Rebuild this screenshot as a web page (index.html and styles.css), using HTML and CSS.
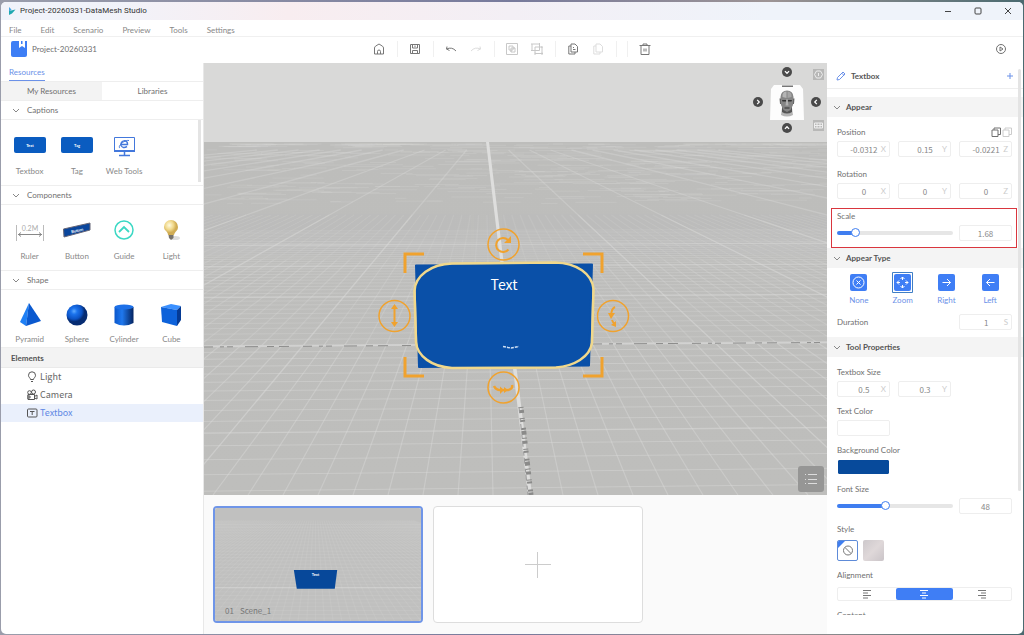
FILE: index.html
```html
<!DOCTYPE html>
<html lang="en">
<head>
<meta charset="utf-8">
<title>Project-20260331-DataMesh Studio</title>
<link rel="stylesheet" href="styles.css">
</head>
<body>
<div class="window">
  <header class="titlebar">
    <svg class="app-logo" viewBox="0 0 8 8"><path d="M1 0 3.500 2.500 1 5Z" fill="#4aa8e8"/><path d="M1 4 7.500 2.500 4 6.500 1 8Z" fill="#20a8b0"/></svg>
    <h1 class="title">Project-20260331-DataMesh Studio</h1>
    <div class="window-controls">
      <button aria-label="Minimize"><svg viewBox="0 0 8 8"><path d="M1 4.500H7"/></svg></button>
      <button aria-label="Maximize"><svg viewBox="0 0 8 8"><rect x="1" y="1" width="6" height="6" rx="1"/></svg></button>
      <button aria-label="Close"><svg viewBox="0 0 8 8"><path d="M1 1 7 7M7 1 1 7"/></svg></button>
    </div>
  </header>
  <nav class="menubar">
    <button>File</button><button>Edit</button><button>Scenario</button><button>Preview</button><button>Tools</button><button>Settings</button>
  </nav>
  <div class="toolbar">
    <div class="project">
      <svg class="project-icon" viewBox="0 0 16 16"><path d="M2 0H16V14Q16 16 14 16H2Q0 16 0 14V2Q0 0 2 0Z" fill="#3d7ef5"/><path d="M8 0H14V7L11 5 8 7Z" fill="#fff"/><path d="M10 0h1.500v3H10z" fill="#3d7ef5"/></svg>
      <span>Project-20260331</span>
    </div>
    <div class="tools">
      <button aria-label="Home"><svg viewBox="0 0 12 12"><path d="M1.500 11V5Q1.500 4 2.500 3.200L6 1 9.500 3.200Q10.500 4 10.500 5V11ZM4.500 11V8.500Q4.500 7 6 7T7.500 8.500V11"/></svg></button>
      <i class="sep"></i>
      <button aria-label="Save"><svg viewBox="0 0 12 12"><path d="M1.500 1.500H10.500V10.500H1.500ZM3.500 1.500V5H8.500V1.500M3.500 10.500V7.500H8.500V10.500M6 2.500V4"/></svg></button>
      <i class="sep"></i>
      <button aria-label="Undo"><svg viewBox="0 0 12 12"><path d="M1.500 6Q7 3.500 11 8M1.500 6 2 3.500M1.500 6 4.500 7.500"/></svg></button>
      <button aria-label="Redo" class="faint" disabled><svg viewBox="0 0 12 12"><path d="M10.500 6Q5 3.500 1 8M10.500 6 10 3.500M10.500 6 7.500 7.500"/></svg></button>
      <i class="sep"></i>
      <button aria-label="Group" class="pale" disabled><svg viewBox="0 0 12 12"><path d="M.5.5H11.500V11.500H.5ZM3 3H7V7H3ZM5 5H9V9H5ZM5 7V9M7 5H9"/></svg></button>
      <button aria-label="Ungroup" class="pale" disabled><svg viewBox="0 0 12 12"><path d="M1 1H8.500V7.500H1ZM4 4H11V10.500H4ZM0 0V2M0 7.500H2M8.500 0V2M10 4H12M10 10.500H12M4 9.500V12M11 9.500V12"/></svg></button>
      <i class="sep"></i>
      <button aria-label="Copy"><svg viewBox="0 0 12 12"><path d="M4 1H8L10.500 3.500V9H4ZM4 3H1.800V11H8V9M6 6.500H8.500M6 4.500H7"/></svg></button>
      <button aria-label="Paste" class="faint" disabled><svg viewBox="0 0 12 12"><path d="M4 1H8L10.500 3.500V9H4ZM4 3H1.800V11H8V9"/></svg></button>
      <i class="sep"></i><i class="sep"></i>
      <button aria-label="Delete"><svg viewBox="0 0 12 12"><path d="M.5 2.500H11.500M4 2.500V1H8V2.500M2 2.500V11.500H10V2.500M5 5.500V8.500M7 5.500V8.500"/></svg></button>
    </div>
    <button class="play" aria-label="Play"><svg viewBox="0 0 12 12"><circle cx="6" cy="6" r="4.500"/><path d="M5 4V8L8 6Z"/></svg></button>
  </div>

  <div class="workspace">
    <aside class="left">
      <div class="resource-title"><button>Resources</button></div>
      <div class="tabs" role="tablist">
        <button role="tab" aria-selected="true">My Resources</button>
        <button role="tab" aria-selected="false">Libraries</button>
      </div>
      <div class="resources">
        <section>
          <button class="group-head"><svg viewBox="0 0 8 5"><path d="M1 1 4 4 7 1"/></svg>Captions</button>
          <div class="tiles">
            <button class="tile"><svg viewBox="0 0 36 24"><rect x="2" y="4" width="32" height="16" rx="2" fill="#0a5cc0"/><text x="18" y="14" class="mini">Text</text></svg>Textbox</button>
            <button class="tile"><svg viewBox="0 0 36 24"><rect x="2" y="4" width="32" height="16" rx="2" fill="#0a5cc0"/><text x="18" y="14" class="mini">Tag</text></svg>Tag</button>
            <button class="tile"><svg viewBox="0 0 36 24" fill="none" stroke="#4378dc"><path d="M8.500 17V4.500H28.500V17" stroke-width="1"/><path d="M8 18H29" stroke-width="2"/><path d="M18.500 18V22M13 22.500H24" stroke-width="1.500"/><path d="M15 11.500H21.500C22 6 14 7 15 12.500Q17 16 21 13.500" stroke-width="1.500"/><path d="M14 15C11 14 18 6.500 23 7.500" stroke-width="1"/></svg>Web Tools</button>
            <i class="list-scroll"></i>
          </div>
        </section>
        <section>
          <button class="group-head"><svg viewBox="0 0 8 5"><path d="M1 1 4 4 7 1"/></svg>Components</button>
          <div class="tiles">
            <button class="tile"><svg viewBox="0 0 36 24" stroke="#888" fill="none" stroke-width="1"><path d="M4.500 7V23M31.500 7V23" stroke="#bbb"/><path d="M6 16.500H30M9 14.500 6.500 16.500 9 18.500M27 14.500 29.500 16.500 27 18.500"/><text x="18" y="13" class="ruler-text">0.2M</text></svg>Ruler</button>
            <button class="tile"><svg viewBox="0 0 36 24"><path d="M4.500 11 31 5V12L5 19Z" fill="#0a469c" stroke="#667" stroke-width="1"/><text x="18" y="14" class="mini tilt">Button</text></svg>Button</button>
            <button class="tile"><svg viewBox="0 0 36 24" fill="none" stroke="#3cd8c4"><circle cx="18" cy="12" r="9" stroke-width="1.500"/><path d="M13 14 18 9 23 14" stroke-width="1.800"/></svg>Guide</button>
            <button class="tile"><svg viewBox="0 0 36 24"><defs><radialGradient id="bulb" cx=".38" cy=".35"><stop stop-color="#fffbe0"/><stop offset=".6" stop-color="#f0d88a"/><stop offset="1" stop-color="#d0ac54"/></radialGradient></defs><ellipse cx="22" cy="20" rx="5" ry="2" fill="#ddd"/><path d="M11 9A7 7 0 1 1 25 9C25 13 22 13 21 17H15C15 13 11 13 11 9Z" fill="url(#bulb)"/><path d="M15.500 17H20.500V20L18 22 16 20Z" fill="#77726a"/></svg>Light</button>
          </div>
        </section>
        <section>
          <button class="group-head"><svg viewBox="0 0 8 5"><path d="M1 1 4 4 7 1"/></svg>Shape</button>
          <div class="tiles last">
            <button class="tile"><svg viewBox="0 0 36 24"><path d="M17 1 8 20 14 24Z" fill="#1f80f5"/><path d="M17 1 14 24 29 19Z" fill="#0a59cf"/></svg>Pyramid</button>
            <button class="tile"><svg viewBox="0 0 36 24"><defs><radialGradient id="ball" cx=".36" cy=".32"><stop stop-color="#5eaaff"/><stop offset=".3" stop-color="#1b73ed"/><stop offset=".75" stop-color="#0b52c4"/><stop offset="1" stop-color="#062c72"/></radialGradient></defs><circle cx="18" cy="13" r="10.500" fill="url(#ball)"/></svg>Sphere</button>
            <button class="tile"><svg viewBox="0 0 36 24"><defs><linearGradient id="cyl"><stop stop-color="#0b57cb"/><stop offset=".4" stop-color="#1f78ee"/><stop offset="1" stop-color="#04235f"/></linearGradient></defs><path d="M8.500 5V21Q18 26 27.500 21V5Z" fill="url(#cyl)"/><ellipse cx="18" cy="5" rx="9.500" ry="2.500" fill="#1d70e8"/></svg>Cylinder</button>
            <button class="tile"><svg viewBox="0 0 36 24"><path d="M8 5 18 2 28 4 24 8Z" fill="#3a90ff"/><path d="M8 5 24 8V24L9 20Z" fill="#0d62da"/><path d="M24 8 28 4V18L24 24Z" fill="#053a94"/></svg>Cube</button>
          </div>
        </section>
      </div>
      <h2 class="elements-head">Elements</h2>
      <ul class="elements">
        <li><button><svg viewBox="0 0 12 12"><path d="M4.500 8.500C4.500 7 2.500 6.500 2.500 4.300A3.500 3.500 0 0 1 9.500 4.300C9.500 6.500 7.500 7 7.500 8.500ZM5 10.500H7"/></svg>Light</button></li>
        <li><button><svg viewBox="0 0 12 12"><path d="M2 5.500H8.500V10.500H2ZM8.500 7.500 11 6V10L8.500 9M1 7H4V9H1"/><circle cx="3.500" cy="3.500" r="1.800"/><circle cx="7.500" cy="3" r="2"/></svg>Camera</button></li>
        <li><button aria-current="true"><svg viewBox="0 0 12 12"><rect x="1.500" y="2" width="9.500" height="8" rx="1"/><path d="M4 4.500H8.500M6.200 4.500V8"/></svg>Textbox</button></li>
      </ul>
    </aside>

    <main class="center">
      <div class="scene">
        <svg class="scene-view" viewBox="204 63 623 432" preserveAspectRatio="xMidYMid slice">
          <defs><linearGradient id="floor" x2="0" y2="1"><stop stop-color="#bdbdbb"/><stop offset="1" stop-color="#bebebc"/></linearGradient></defs>
          <rect x="204" y="63" width="623" height="80" fill="#d9d9d8"/>
          <rect x="204" y="142" width="623" height="353" fill="url(#floor)"/>
          <g id="grid"></g>
          <path d="M486 142H489L532 495H528Z" fill="#dededd"/>
          <path d="M204 346.500 415 345M593 344 827 342.500" stroke="#d2d2d1" stroke-width="1.500"/>
          <path d="M204 347 415 345.500M593 344 827 342.500" stroke="#8c8c8b" stroke-width="1" stroke-dasharray="9 7 4 3 6 12 13 9 7 5 10 14"/>
          <path d="M521 407 531 495" stroke="#8a8a89" stroke-width="5" stroke-dasharray="1 2 3 5 1 1 2 6 2 1 4 3"/>
          <path d="M519 407 528 495" stroke="#999" stroke-width="1" stroke-dasharray="6 5 4 2"/>
          <path d="M416 265.500 592 264.500 589 365.500 419 367Z" fill="#0a50a8" stroke="#0a50a8" stroke-width="2" stroke-linejoin="round"/>
          <path d="M452 263.500 555 262.500C577 263 592 274 593.500 289L592 343C590 357 574 366 556 367.500L452 368C432 367 417 356 416 342L414.500 291C415 276 431 264 452 263.500Z" fill="none" stroke="#f0d88c" stroke-width="2.500"/>
          <text x="504" y="290" class="scene-text">Text</text>
          <path d="M503 346.500 508 347.500 511 348 519 346.500" fill="none" stroke="#cfe0f5" stroke-width="1.500" stroke-dasharray="3 1"/>
          <g fill="none" stroke="#f0a22e">
            <path d="M405 273V254H424M583 254H602V273M602 357V376H583M424 376H405V357" stroke-width="3"/>
            <g stroke-width="1.500"><circle cx="503.500" cy="244.500" r="15.500"/><circle cx="394.500" cy="316" r="15.500"/><circle cx="613" cy="316" r="15.500"/><circle cx="503.500" cy="387.500" r="15.500"/></g>
            <g stroke-width="2">
              <path d="M508.500 249.500A7 7 0 1 1 508 240"/>
              <path d="M394.500 307V324"/>
              <path d="M615 307Q611 309 611.500 315M612 320Q613 323 615 324"/>
              <path d="M494 386Q496 390 500 390H508Q513 389 512 385" stroke-width="2.500"/>
            </g>
          </g>
          <path d="M391 309 394.500 304 398 309ZM391 322 394.500 327 398 322ZM608 313H615L611 319ZM611 325 616 321V327ZM511 236V243H504ZM500 386.500 504 390 500 394ZM504 387V393L508 390Z" fill="#f0a22e"/>
        </svg>
        <div class="gizmo">
          <button class="round g-top" aria-label="View from top"><svg viewBox="0 0 12 12"><path d="M3.500 5 6 7.500 8.500 5"/></svg></button>
          <button class="round g-left" aria-label="View from left"><svg viewBox="0 0 12 12"><path d="M5 3.500 7.500 6 5 8.500"/></svg></button>
          <svg class="head" viewBox="0 0 34 36"><path d="M4 1H30L33 5 34 36H0L1 5Z" fill="#fdfdfd"/><path d="M12 1.500H23V3H12Z" fill="#777"/><path d="M12 24H22L23 31Q17 34 11 31Z" fill="#b5b5b5"/><path d="M12 23H22V28Q17 31 12 28Z" fill="#555"/><path d="M10.500 13Q11 6.500 17 6.500T23.500 13L23 21 20.500 26 17 28 13.500 26 11 21Z" fill="#858585"/><path d="M12.500 13Q12 7.500 16.500 7.500V14Z" fill="#b5b5b5"/><path d="M17.500 7.500Q22 7.500 21.500 13L17.500 14Z" fill="#a5a5a5"/><path d="M9.500 14.500H11V20H10ZM23 14.500H24.500L24 20H23Z" fill="#666"/><path d="M12 16H16V17.500H12.500ZM18 16H22L21.500 17.500H18ZM14.500 23.500H19.500V24.500H14.500Z" fill="#333"/><path d="M16.500 15H17.500L18.500 21.500H15.500Z" fill="#b0b0b0"/></svg>
          <button class="round g-right" aria-label="View from right"><svg viewBox="0 0 12 12"><path d="M7 3.500 4.500 6 7 8.500"/></svg></button>
          <button class="round g-bottom" aria-label="View from bottom"><svg viewBox="0 0 12 12"><path d="M3.500 7 6 4.500 8.500 7"/></svg></button>
        </div>
        <div class="view-options">
          <button aria-label="Focus"><svg viewBox="0 0 11 11"><path d="M3.500 2 1.500 5.500 3.500 9H7.500L9.500 5.500 7.500 2Z"/><path d="M5.500 4V7"/></svg></button>
          <button aria-label="Grid"><svg viewBox="0 0 11 11"><path d="M1.500 3H9.500V8H1.500ZM1.500 5.500H9.500M4 3V8M7 3V8"/></svg></button>
        </div>
        <button class="scene-list" aria-label="Scene list"><svg viewBox="0 0 14 14"><path d="M4 2.500H13M4 7.500H13M4 11.500H13M1 2.500H2M1 7.500H2M1 11.500H2"/></svg></button>
      </div>
      <div class="scenes">
        <button class="scene-card selected">
          <svg viewBox="0 0 209 117" preserveAspectRatio="xMidYMid slice"><rect width="209" height="117" fill="#c0c0bf"/><g id="thumb-grid"></g><path d="M80 64H124L121.500 83H83Z" fill="#07489a"/><text x="102" y="70" class="mini">Text</text></svg>
          <span class="caption"><span>01</span><span>Scene_1</span></span>
        </button>
        <button class="scene-card" aria-label="Add scene"><svg class="plus" viewBox="0 0 26 26"><path d="M0 12.500H26M12.500 0V26"/></svg></button>
      </div>
    </main>

    <aside class="right">
      <header class="prop-title"><svg viewBox="0 0 10 10"><path d="M1 9 1.500 6.500 7 1 9 3 3.500 8.500ZM5.800 2.200 7.800 4.200"/></svg><h2>Textbox</h2><button aria-label="Add"><svg viewBox="0 0 8 8"><path d="M1 4H7M4 1V7"/></svg></button></header>
      <div class="props">
        <button class="section-head"><svg viewBox="0 0 8 5"><path d="M1 1 4 4 7 1"/></svg>Appear</button>
        <div class="fields roomy">
          <fieldset>
            <legend class="with-tools">Position <span class="copy-tools"><button aria-label="Copy position"><svg viewBox="0 0 10 10"><path d="M1 3H7V9.500H1ZM3 3V1H9.500V7.500H7"/></svg></button><button class="faint" aria-label="Paste position"><svg viewBox="0 0 10 10"><path d="M1 3H7V9.500H1ZM3 3V1H9.500V7.500H7"/></svg></button></span></legend>
            <div class="three">
              <label class="num"><input value="-0.0312"><span>X</span></label>
              <label class="num"><input value="0.15"><span>Y</span></label>
              <label class="num"><input value="-0.0221"><span>Z</span></label>
            </div>
          </fieldset>
          <fieldset>
            <legend>Rotation</legend>
            <div class="three">
              <label class="num"><input value="0"><span>X</span></label>
              <label class="num"><input value="0"><span>Y</span></label>
              <label class="num"><input value="0"><span>Z</span></label>
            </div>
          </fieldset>
        </div>
        <fieldset class="scale-box">
          <label for="scale">Scale</label>
          <div class="slider-row"><input id="scale" class="slider at-low" type="range" min="0" max="10" step="0.01" value="1.35"><input class="plain" aria-label="Scale value" value="1.68"></div>
        </fieldset>
        <button class="section-head"><svg viewBox="0 0 8 5"><path d="M1 1 4 4 7 1"/></svg>Appear Type</button>
        <div class="appear-types">
          <button><svg viewBox="0 0 21 21"><rect x="2" y="2" width="17" height="17" rx="2"/><circle cx="10.500" cy="10.500" r="5.500"/><path d="M8.500 8.500 12.500 12.500M12.500 8.500 8.500 12.500"/></svg>None</button>
          <button aria-pressed="true"><svg viewBox="0 0 21 21"><path class="frame" d="M.5.5H20.500V20.500H.5Z"/><rect x="2" y="2" width="17" height="17" rx="2"/><path d="M8.500 7 10.500 5 12.500 7M8.500 14 10.500 16 12.500 14M7 8.500 5 10.500 7 12.500M14 8.500 16 10.500 14 12.500M10.500 5V8M10.500 13V16M5 10.500H8M13 10.500H16"/></svg>Zoom</button>
          <button><svg viewBox="0 0 21 21"><rect x="2" y="2" width="17" height="17" rx="2"/><path d="M6.500 10.500H14.500M11 7 14.500 10.500 11 14"/></svg>Right</button>
          <button><svg viewBox="0 0 21 21"><rect x="2" y="2" width="17" height="17" rx="2"/><path d="M14.500 10.500H6.500M10 7 6.500 10.500 10 14"/></svg>Left</button>
        </div>
        <div class="duration"><label for="duration">Duration</label><span class="num"><input id="duration" value="1"><span>S</span></span></div>
        <button class="section-head"><svg viewBox="0 0 8 5"><path d="M1 1 4 4 7 1"/></svg>Tool Properties</button>
        <div class="fields">
          <fieldset>
            <legend>Textbox Size</legend>
            <div class="three">
              <label class="num"><input value="0.5"><span>X</span></label>
              <label class="num"><input value="0.3"><span>Y</span></label>
            </div>
          </fieldset>
          <div><label for="text-color">Text Color</label><input id="text-color" class="swatch" type="color" value="#ffffff"></div>
          <div><label for="bg-color">Background Color</label><input id="bg-color" class="swatch filled" type="color" value="#074a9b"></div>
          <div><label for="font-size">Font Size</label><div class="slider-row"><input id="font-size" class="slider at-mid" type="range" value="41"><input class="plain" aria-label="Font size value" value="48"></div></div>
          <fieldset>
            <legend>Style</legend>
            <div class="styles">
              <button class="no-style" aria-label="No style" aria-pressed="true"><svg viewBox="0 0 19 19"><path class="corner" d="M0 0H7L0 7Z"/><circle cx="10" cy="9.500" r="4.500"/><path d="M7 6.500 13 12.500"/></svg></button>
              <button class="glass" aria-label="Glass style"></button>
            </div>
          </fieldset>
          <fieldset>
            <legend>Alignment</legend>
            <div class="align">
              <button aria-label="Align left"><svg viewBox="0 0 10 10"><path d="M1 1.500H9M1 4H6M1 6.500H9M1 9H6"/></svg></button>
              <button aria-label="Align center" aria-pressed="true"><svg viewBox="0 0 10 10"><path d="M1 1.500H9M3 4H7M1 6.500H9M3 9H7"/></svg></button>
              <button aria-label="Align right"><svg viewBox="0 0 10 10"><path d="M1 1.500H9M4 4H9M1 6.500H9M4 9H9"/></svg></button>
            </div>
          </fieldset>
          <div class="content-row"><span>Content</span><button aria-label="Expand content"><svg viewBox="0 0 8 8"><path d="M4 4V8M2 6 4 4 6 6"/></svg></button></div>
        </div>
      </div>
      <i class="scrollbar"></i>
    </aside>
  </div>
</div>
<script src="grid.js"></script>
</body>
</html>
```

FILE: styles.css
```css
* { box-sizing: border-box; }
body {
  margin: 0;
  height: 100vh;
  padding: 2px 1px 1px;
  background: linear-gradient(90deg, #9a9dab, #777a9c 50%, #9d9495 75%, #4b6a70);
  font: 8px/12px Lato, "Noto Sans", sans-serif;
  color: #707070;
}
button, input { font: inherit; color: inherit; }
button { border: 0; padding: 0; background: none; }
svg { display: block; }
fieldset { border: 0; margin: 0; padding: 0; min-width: 0; }
legend { padding: 0; }
h1, h2, ul { margin: 0; padding: 0; }
.window {
  height: 100%;
  display: flex;
  flex-direction: column;
  background: #fff;
  border-radius: 5px;
  overflow: hidden;
}
.titlebar {
  flex: 0 0 18px;
  display: flex;
  align-items: center;
  padding-left: 7px;
  background: linear-gradient(90deg, #f1f3fa 10%, #f8edf0 28%, #f3eff5 50%, #eff3fa 75%);
}
.app-logo { width: 8px; height: 8px; margin-right: 4px; }
.title { flex: 1; font: 8px/16px Roboto, "Noto Sans", sans-serif; color: #333; }
.window-controls { display: flex; }
.window-controls button { width: 30px; display: grid; place-items: center; }
.window-controls svg { width: 8px; height: 8px; fill: none; stroke: #444; }
.menubar {
  flex: 0 0 17px;
  display: flex;
  gap: 19px;
  padding: 3px 0 0 8px;
  border-bottom: 1px solid #f0f0f0;
  color: #888;
}
.toolbar {
  flex: 0 0 26px;
  display: grid;
  grid-template-columns: 1fr auto 1fr;
  align-items: center;
  padding-bottom: 2px;
}
.project { display: flex; align-items: center; gap: 5px; padding-left: 10px; }
.project-icon { width: 16px; height: 16px; }
.tools { display: flex; align-items: center; }
.tools button { width: 25px; display: grid; place-items: center; color: #777; }
.tools svg, .play svg { width: 12px; height: 12px; fill: none; stroke: currentColor; }
.tools .faint { color: #ddd; }
.tools .pale { color: #c8c8c8; }
.sep { width: 1px; height: 16px; margin: 0 5px; background: #f0f0f0; }
.play { justify-self: end; margin-right: 16px; }
.workspace { flex: 1; min-height: 0; display: flex; }

.left { flex: 0 0 203px; border-right: 1px solid #e8e8e8; }
.resource-title { height: 18px; padding-left: 8px; color: #6b91e8; }
.resource-title button { height: 18px; border-bottom: 1px solid #6b91e8; }
.tabs { display: grid; grid-template-columns: 1fr 1fr; border-bottom: 1px solid #eee; border-top: 1px solid #eee; }
.tabs button { height: 18px; }
.tabs [aria-selected="true"] { background: #f3f3f3; }
.group-head {
  display: flex;
  align-items: center;
  width: 100%;
  height: 19px;
  padding-left: 11px;
  gap: 7px;
  border-bottom: 1px solid #eee;
}
.group-head svg, .section-head svg { width: 8px; height: 5px; fill: none; stroke: #888; }
.tiles {
  position: relative;
  display: grid;
  grid-template-columns: repeat(4, 1fr);
  padding: 13px 8px 8px 5px;
  border-bottom: 1px solid #eee;
}
.tiles.last { padding-top: 12px; padding-bottom: 2px; }
.tile { display: flex; flex-direction: column; align-items: center; gap: 8px; color: #888; white-space: nowrap; }
.tile svg { width: 36px; height: 24px; }
.tiles.last .tile { gap: 7px; }
.mini { font-size: 4px; font-weight: 700; fill: #fff; text-anchor: middle; }
.tilt { transform: rotate(-13deg); transform-origin: 18px 12px; }
.ruler-text { font-size: 7px; fill: #aaa; stroke: none; text-anchor: middle; }
.list-scroll { position: absolute; right: 2px; top: 0; width: 3px; height: 62px; background: #e4e4e4; }
.elements-head { height: 20px; padding-left: 10px; background: #f3f3f3; border-bottom: 1px solid #eaeaea; font-size: 8px; line-height: 20px; font-weight: 700; color: #555; }
.elements { list-style: none; font-family: "Noto Sans CJK SC", sans-serif; font-size: 9px; color: #666; }
.elements button { width: 100%; height: 18px; padding-left: 25px; display: flex; align-items: center; gap: 2px; }
.elements svg { width: 12px; height: 12px; fill: none; stroke: #555; }
.elements [aria-current] { background: #eaf0fc; color: #6189e4; }

.center { flex: 1; min-width: 0; display: flex; flex-direction: column; }
.scene { position: relative; flex: 1; min-height: 0; overflow: hidden; background: #bebebc; }
.scene-view { width: 100%; height: 100%; }
.scene-text { font-family: "Noto Sans CJK SC", sans-serif; font-size: 14px; fill: #fff; text-anchor: middle; }
.gizmo {
  position: absolute;
  top: 4px;
  right: 5px;
  display: grid;
  grid-template: "a t b" 18px "l h r" 34px "c d e" 18px / 12px 46px 12px;
  place-items: center;
}
.g-top { grid-area: t; align-self: start; }
.g-left { grid-area: l; }
.g-right { grid-area: r; }
.g-bottom { grid-area: d; }
.head { grid-area: h; width: 34px; height: 36px; }
.round { width: 10px; height: 10px; border-radius: 50%; background: #4a4a4a; }
.round svg { width: 10px; height: 10px; fill: none; stroke: #fff; stroke-width: 1.500; }
.view-options { position: absolute; top: 6px; right: 3px; display: flex; flex-direction: column; gap: 40px; }
.view-options button { width: 11px; height: 11px; background: #b8b8b7; }
.view-options svg { width: 11px; height: 11px; fill: none; stroke: #eee; }
.scene-list { position: absolute; right: 3px; bottom: 3px; width: 26px; height: 26px; border-radius: 3px; background: #969695; display: grid; place-items: center; }
.scene-list svg { width: 14px; height: 14px; fill: none; stroke: #ddd; }
.scenes { flex: 0 0 139px; display: flex; gap: 10px; padding: 11px 9px; background: #fafafa; }
.scene-card { position: relative; flex: 0 0 210px; height: 117px; border: 1px solid #ddd; border-radius: 4px; background: #fff; overflow: hidden; display: grid; place-items: center; }
.scene-card.selected { border: 2px solid #6f95e8; }
.scene-card.selected > svg { width: 100%; height: 100%; }
.caption { position: absolute; left: 10px; bottom: 4px; display: flex; gap: 6px; font-family: "Noto Sans CJK SC", sans-serif; color: #777; }
.plus { width: 26px; height: 26px; stroke: #ccc; }

.right { position: relative; flex: 0 0 196px; display: flex; flex-direction: column; padding-bottom: 19px; }
.prop-title { flex: 0 0 26px; display: flex; align-items: center; padding: 0 9px; gap: 5px; border-bottom: 1px solid #eee; }
.prop-title svg { width: 10px; height: 10px; fill: none; stroke: #6b91e8; }
.prop-title button svg { width: 8px; height: 8px; }
.prop-title h2 { flex: 1; font-size: 8px; line-height: 12px; font-weight: 700; color: #555; }
.props { flex: 1; min-height: 0; overflow: hidden; padding-top: 8px; }
.section-head { width: 100%; height: 20px; padding-left: 6px; display: flex; align-items: center; gap: 5px; background: #f4f4f4; font-weight: 700; color: #555; }
.fields { display: flex; flex-direction: column; gap: 8px; padding: 9px 11px 0 10px; }
.roomy { gap: 11px; }
.fields label, .fields legend, .scale-box label { display: block; }
.fields .with-tools { display: flex; width: 100%; height: 12px; justify-content: space-between; align-items: center; }
.copy-tools { display: flex; gap: 1px; }
.copy-tools svg { width: 10px; height: 10px; fill: none; stroke: currentColor; }
.copy-tools .faint { color: #ccc; }
.three { display: grid; grid-template-columns: repeat(3, 1fr); gap: 8px; margin-top: 3px; }
.fields .num, .num { display: flex; align-items: center; height: 16px; border: 1px solid #eee; border-radius: 2px; padding-right: 3px; color: #888; }
.num input { flex: 1; min-width: 0; width: 0; border: 0; padding: 0 0 0 9px; height: 14px; font-family: "Noto Sans CJK SC", sans-serif; text-align: center; background: none; }
.num span { color: #ccc; }
.scale-box { margin: 9px 6px 0 4px; padding: 1px 4px 6px 5px; border: 1px solid #d9363e; }
.slider-row { display: grid; grid-template-columns: 1fr 53px; gap: 6px; align-items: center; margin-top: 3px; }
.slider { appearance: none; width: 100%; height: 10px; margin: 0; background: none; }
.slider::-webkit-slider-runnable-track { height: 4px; border-radius: 2px; background: #e6e6e6; }
.slider.at-low::-webkit-slider-runnable-track { background: linear-gradient(90deg, #3f7ef0 17%, #e6e6e6 17%); }
.slider.at-mid::-webkit-slider-runnable-track { background: linear-gradient(90deg, #3f7ef0 41%, #e6e6e6 41%); }
.slider::-webkit-slider-thumb { appearance: none; width: 9px; height: 9px; margin-top: -3px; border: 1px solid #3f7ef0; border-radius: 50%; background: #fff; }
.plain { width: 100%; height: 16px; padding: 0; border: 1px solid #eee; border-radius: 2px; font-family: "Noto Sans CJK SC", sans-serif; text-align: center; color: #888; background: #fff; }
.appear-types { display: grid; grid-template-columns: repeat(4, 1fr); padding: 4px 11px 0 10px; color: #6b91e8; }
.appear-types button { display: flex; flex-direction: column; align-items: center; gap: 1px; }
.appear-types svg { width: 21px; height: 21px; fill: none; stroke: #fff; }
.appear-types rect { fill: #3f7ef5; stroke: none; }
.appear-types .frame { stroke: #3f7ec5; }
.duration { display: flex; align-items: center; justify-content: space-between; padding: 8px 11px 7px 10px; }
.duration .num { width: 53px; }
.swatch { display: block; width: 53px; height: 16px; margin-top: 3px; padding: 0; border: 1px solid #eee; border-radius: 2px; background: #fff; overflow: hidden; }
.swatch.filled { border-color: #fff; }
.swatch::-webkit-color-swatch-wrapper { padding: 0; }
.swatch::-webkit-color-swatch { border: 0; border-radius: 1px; }
.fields .slider-row { margin: 3px 0 1px; }
.styles { display: flex; gap: 5px; margin-top: 5px; }
.styles button { width: 21px; height: 21px; border-radius: 2px; overflow: hidden; }
.no-style { border: 1px solid #5e8bd8; }
.no-style svg { width: 19px; height: 19px; fill: none; stroke: #777; }
.no-style .corner { fill: #3f7ef0; stroke: none; }
.glass { background: linear-gradient(135deg, #cdc8cb, #dfd8d9 50%, #cac4c8); }
.align { display: grid; grid-template-columns: repeat(3, 1fr); height: 14px; margin-top: 6px; border: 1px solid #eee; border-radius: 2px; }
.align button { display: grid; place-items: center; height: 12px; border-radius: 2px; }
.align svg { width: 10px; height: 10px; stroke: #777; }
.align [aria-pressed] { background: #3f7ef5; }
.align [aria-pressed] svg { stroke: #fff; }
.content-row { display: flex; justify-content: space-between; }
.content-row svg { width: 8px; height: 8px; fill: none; stroke: #777; }
.scrollbar { position: absolute; right: 2px; top: 6px; width: 3px; height: calc(75% - 6px); border-radius: 2px; background: #e4e4e4; }
```

FILE: grid.js
```js
// Draws perspective floor grids as SVG lines.
const NS = "http://www.w3.org/2000/svg";

function line(parent, x1, y1, x2, y2, width, opacity) {
  const el = document.createElementNS(NS, "path");
  el.setAttribute("d", `M${x1.toFixed(1)} ${y1.toFixed(1)}L${x2.toFixed(1)} ${y2.toFixed(1)}`);
  el.setAttribute("stroke", "#dcdcdb");
  el.setAttribute("stroke-width", width);
  el.setAttribute("opacity", opacity);
  parent.appendChild(el);
}

function drawFloor() {
  const g = document.getElementById("grid");
  const vx = 485, vy = 128, bottom = 495;
  const atDepth = (i, y) => vx + (43 + i * 35) * (y - vy) / 367;
  for (let i = -110; i <= 110; i++) {
    if (i === 0) continue;
    const major = i % 10 === 0;
    if (!major && Math.abs(i) > 40) continue;
    const steps = major ? [[150, 215, .35], [215, bottom, .5]] : [[215, 260, .15], [260, 340, .28], [340, bottom, .42]];
    for (const [a, b, o] of steps) {
      line(g, atDepth(i, a), a, atDepth(i, b), b, major ? 1.3 : 1.2, o);
    }
  }
  for (let n = -16; n < 40; n++) {
    const h = 7560 / (35 + n);
    const y = vy + h;
    const tilt = h * 0.00003;
    const major = n % 10 === 0;
    const o = y < 240 ? .18 : y < 340 ? .3 : .42;
    line(g, 204, y + 300 * tilt, 827, y - 320 * tilt, major ? 1.4 : 1, major ? .5 : o);
  }
  // Broken far-distance lines under the horizon.
  let seed = 7;
  const rand = () => (seed = (seed * 16807) % 2147483647) / 2147483647;
  for (let i = 0; i < 420; i++) {
    const y = 144 + Math.pow(rand(), 2) * 60;
    const x = 204 + rand() * 623;
    const len = 10 + rand() * 50;
    line(g, x, y, x + len, y, .7, .3);
  }
}

function drawThumb() {
  const g = document.getElementById("thumb-grid");
  for (let i = -45; i <= 45; i++) {
    line(g, 102 + i * 2.2, 14, 102 + i * 9, 117, .6, .25);
  }
  for (let n = 0; n < 30; n++) {
    const y = 117 - n * 4 + n * n * 0.02;
    line(g, 0, y, 209, y, .6, .3);
  }
  line(g, 0, 82, 209, 82, 1, .6);
}

drawFloor();
drawThumb();
```
